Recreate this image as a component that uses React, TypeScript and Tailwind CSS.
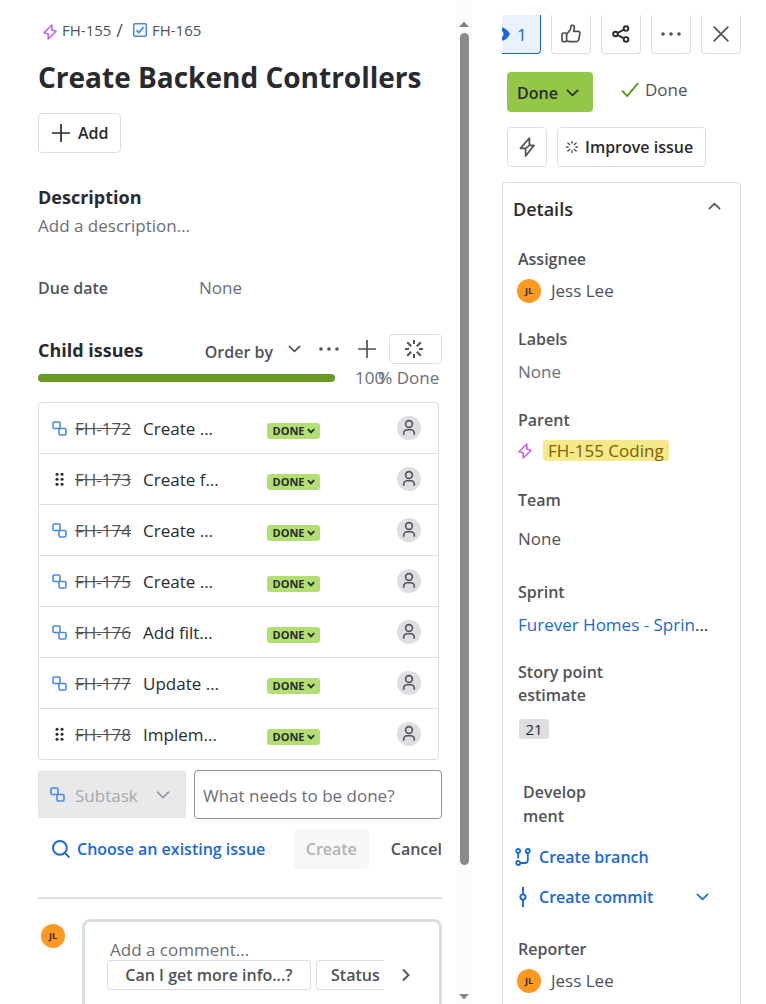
import React from "react";

type IconProps = { className?: string };

const Chevron = ({ className = "" }: IconProps) => (
  <svg viewBox="0 0 14 8" className={className} fill="none" stroke="currentColor" strokeWidth="1.8" strokeLinecap="round" strokeLinejoin="round" aria-hidden="true">
    <path d="M1.5 1.2 7 6.6l5.500-5.400" />
  </svg>
);

const EpicIcon = ({ className = "" }: IconProps) => (
  <svg viewBox="0 0 14 16" className={className} fill="none" stroke="#bf63f3" strokeWidth="1.600" strokeLinejoin="round" aria-hidden="true">
    <path d="M8.800 1v5.100l4.200 1.200-7.800 7.700V9.900L1 8.700z" />
  </svg>
);

const TaskIcon = () => (
  <svg viewBox="0 0 14 14" className="size-[14px]" fill="none" stroke="#4688ec" strokeWidth="1.500" aria-hidden="true">
    <rect x="0.750" y="0.750" width="12.500" height="12.500" rx="1" />
    <path d="m3.500 7.200 2.400 2.500 4.600-5.600" strokeWidth="1.700" />
  </svg>
);

const SubtaskIcon = () => (
  <svg viewBox="0 0 15 15" className="size-[15px] shrink-0" fill="none" stroke="#4688ec" strokeWidth="1.600" strokeLinejoin="round" aria-hidden="true">
    <rect x="1" y="1" width="7" height="6.500" rx="1.200" />
    <path d="M8 7.500h4.600A1.400 1.400 0 0 1 14 8.900v3.700a1.400 1.400 0 0 1-1.400 1.400H8.400A1.400 1.400 0 0 1 7 12.600V7.500" />
  </svg>
);

const DragIcon = () => (
  <svg viewBox="0 0 15 15" className="size-[15px] shrink-0" fill="#292a2e" aria-hidden="true">
    {[2.2, 7.2, 12.2].map((y) => (
      <g key={y}>
        <circle cx="5" cy={y} r="1.500" />
        <circle cx="10" cy={y} r="1.500" />
      </g>
    ))}
  </svg>
);

const PlusIcon = ({ className = "" }: IconProps) => (
  <svg viewBox="0 0 18 18" className={className} fill="none" stroke="currentColor" strokeWidth="1.700" aria-hidden="true">
    <path d="M9 0v18M0 9h18" />
  </svg>
);

const DotsIcon = () => (
  <svg viewBox="0 0 22 4" className="h-[4px] w-[22px]" fill="currentColor" aria-hidden="true">
    <circle cx="3" cy="2" r="1.800" />
    <circle cx="11" cy="2" r="1.800" />
    <circle cx="19" cy="2" r="1.800" />
  </svg>
);

const BurstIcon = ({ className = "" }: IconProps) => (
  <svg viewBox="0 0 18 18" className={className} fill="none" stroke="currentColor" strokeWidth="2" aria-hidden="true">
    <path d="M9 0v4M9 14v4M0 9h4M14 9h4M2.200 2.200l4 4M11.800 11.800l4 4M15.800 2.200l-4 4M6.200 11.800l-4 4" />
  </svg>
);

const PersonIcon = () => (
  <svg viewBox="0 0 24 24" className="size-6" fill="none" stroke="#505258" strokeWidth="1.600" aria-hidden="true">
    <circle cx="12" cy="8" r="3.400" />
    <path d="M6.700 18.800v-1.600a3.400 3.400 0 0 1 3.400-3.400h3.800a3.400 3.400 0 0 1 3.400 3.400v1.600" />
  </svg>
);

const LikeIcon = () => (
  <svg viewBox="0 0 20 20" className="size-5" fill="none" stroke="currentColor" strokeWidth="1.700" strokeLinejoin="round" aria-hidden="true">
    <rect x="1" y="9" width="4.600" height="8.600" rx="1.200" />
    <path d="M5.600 10.200 9.300 5.800l.5-3.200c.2-1.100 1-1.600 1.900-1.300 1.300.4 1.800 1.500 1.600 2.800L12.700 7.400h4.400c1.300 0 2 1 1.800 2.200l-1.300 6.300c-.2 1-1 1.700-2 1.700H8.200l-2.600-.9" />
  </svg>
);

const ShareIcon = () => (
  <svg viewBox="0 0 18 18" className="size-[18px]" fill="none" stroke="#292a2e" strokeWidth="1.900" aria-hidden="true">
    <circle cx="3.500" cy="9" r="2.300" />
    <circle cx="14" cy="3.600" r="2.300" />
    <circle cx="14" cy="14.400" r="2.300" />
    <path d="m5.600 8 6.300-3.300M5.600 10l6.300 3.300" />
  </svg>
);

const CloseIcon = () => (
  <svg viewBox="0 0 16 16" className="size-4" fill="none" stroke="currentColor" strokeWidth="1.700" strokeLinecap="round" aria-hidden="true">
    <path d="m1.200 1.200 13.600 13.600M14.800 1.200 1.200 14.800" />
  </svg>
);

const BoltIcon = () => (
  <svg viewBox="0 0 18 20" className="h-5 w-[18px]" fill="none" stroke="currentColor" strokeWidth="1.700" strokeLinejoin="round" aria-hidden="true">
    <path d="M11.400 1 2.400 11.400h5.200v7.600L16 8.400h-4.600zM7.600 11.400l3.800-3" />
  </svg>
);

const CheckIcon = () => (
  <svg viewBox="0 0 18 16" className="h-4 w-[18px]" fill="none" stroke="#5b9a17" strokeWidth="1.900" aria-hidden="true">
    <path d="m1 8.600 5.200 5.400L17 1.200" />
  </svg>
);

const SearchIcon = () => (
  <svg viewBox="0 0 18 18" className="size-[18px]" fill="none" stroke="currentColor" strokeWidth="1.900" aria-hidden="true">
    <circle cx="7.900" cy="7.900" r="6.900" />
    <path d="m12.800 12.800 4.700 4.700" />
  </svg>
);

const BranchIcon = () => (
  <svg viewBox="0 0 16 18" className="h-[18px] w-4" fill="none" stroke="currentColor" strokeWidth="1.800" aria-hidden="true">
    <circle cx="3.200" cy="3" r="2" />
    <circle cx="12.800" cy="3" r="2" />
    <circle cx="3.200" cy="15" r="2" />
    <path d="M3.200 5v5.600M12.800 5v7.200a2.800 2.800 0 0 1-2.800 2.800H5.200" />
  </svg>
);

const CommitIcon = () => (
  <svg viewBox="0 0 16 20" className="h-5 w-4" fill="none" stroke="currentColor" strokeWidth="1.900" aria-hidden="true">
    <circle cx="8" cy="10" r="2.600" />
    <path d="M8 0v7.400M8 12.600V20" />
  </svg>
);

const Avatar = () => (
  <span className="flex size-6 shrink-0 items-center justify-center rounded-full bg-[#ff991f] text-[9px] font-bold text-[#292a2e]">
    JL
  </span>
);

const children = [
  { key: "FH-172", summary: "Create ...", hovered: false },
  { key: "FH-173", summary: "Create f...", hovered: true },
  { key: "FH-174", summary: "Create ...", hovered: false },
  { key: "FH-175", summary: "Create ...", hovered: false },
  { key: "FH-176", summary: "Add filt...", hovered: false },
  { key: "FH-177", summary: "Update ...", hovered: false },
  { key: "FH-178", summary: "Implem...", hovered: true },
];

const iconButton = "flex h-[39px] w-10 shrink-0 items-center justify-center rounded-b-[4px] border border-t-0 border-[#dddee1] text-[#505258]";

function IssuePane() {
  return (
    <main className="min-w-0 flex-1 overflow-hidden pl-[38px] pr-[14px] pt-5">
      <nav aria-label="Breadcrumb" className="flex h-5 items-center pl-[5px] text-[15px] text-[#505258]">
        <EpicIcon className="mt-1 h-4 w-[14px]" />
        <a href="#FH-155" className="ml-[5px]">FH-155</a>
        <span className="ml-[5px] text-[18px]">/</span>
        <a href="#FH-165" className="ml-[10px] flex items-center gap-[5px]">
          <TaskIcon />
          FH-165
        </a>
      </nav>
      <h1 className="mt-[17px] whitespace-nowrap text-[28px] font-bold leading-10 text-[#292a2e]">Create Backend Controllers</h1>
      <button type="button" className="mt-4 flex h-10 items-center gap-2 rounded-[4px] border border-[#dddee1] pl-[13px] pr-[11px] text-[16px] font-semibold text-[#292a2e]">
        <PlusIcon className="size-[18px]" />
        Add
      </button>

      <h2 className="mt-8 text-[18px] font-bold leading-6 text-[#292a2e]">Description</h2>
      <p className="mt-[5px] leading-6 text-[#6b6e76]">Add a description...</p>

      <div className="mt-[38px] flex leading-6">
        <span className="w-[161px] text-[16px] font-semibold text-[#505258]">Due date</span>
        <span className="text-[#6b6e76]">None</span>
      </div>

      <section aria-label="Child issues">
        <div className="mt-[34px] flex h-[30px] items-center text-[#505258]">
          <h2 className="flex-1 whitespace-nowrap pt-[2px] text-[18px] font-bold text-[#292a2e]">Child issues</h2>
          <button type="button" className="flex items-center gap-[15px] text-[16px] font-semibold">
            <span className="pt-[6px]">Order by</span>
            <Chevron className="h-2 w-[13px]" />
          </button>
          <button type="button" aria-label="More actions" className="ml-[17px]"><DotsIcon /></button>
          <button type="button" aria-label="Create child issue" className="ml-[18px]"><PlusIcon className="size-[18px]" /></button>
          <button type="button" aria-label="Suggest child issues" className="ml-[13px] flex h-[30px] w-[53px] items-center justify-center rounded-[4px] border border-[#dddee1] pr-1">
            <BurstIcon className="size-[18px]" />
          </button>
        </div>
        <div className="mt-[2px] flex h-6 items-center">
          <div role="progressbar" aria-label="Child issues done" aria-valuenow={100} className="h-2 flex-1 rounded-full bg-[#6a9a23]" />
          <span className="ml-5 w-[87px] whitespace-nowrap text-[#6b6e76]">
            100<span className="-ml-[6px]">% Done</span>
          </span>
        </div>
        <ul className="mt-3 rounded-[4px] border border-[#dddee1] mr-[3px] divide-y divide-[#dddee1]">
          {children.map((c, i) => (
            <li key={c.key} className={i === children.length - 1 ? "flex h-[50px] items-center pl-[13px] pr-[17px]" : "flex h-[51px] items-center pl-[13px] pr-[17px]"}>
              {c.hovered ? <DragIcon /> : <SubtaskIcon />}
              <a href={`#${c.key}`} className="ml-2 w-[68px] whitespace-nowrap pt-[2px] text-[#505258] line-through">{c.key}</a>
              <span className="flex-1 whitespace-nowrap pt-[2px] text-[#292a2e]">{c.summary}</span>
              <button type="button" className="mr-[77px] mt-[6px] flex h-4 w-[53px] items-center justify-center gap-[2px] rounded-[3px] bg-[#b3df72] text-[11px] font-bold leading-4 text-[#292a2e]">
                DONE
                <svg viewBox="0 0 8 6" className="h-[6px] w-2" fill="none" stroke="currentColor" strokeWidth="1.800" aria-hidden="true">
                  <path d="m0.800 1.200 3.200 3.200 3.200-3.200" />
                </svg>
              </button>
              <span className="rounded-full bg-[#dddee1]" role="img" aria-label="Unassigned"><PersonIcon /></span>
            </li>
          ))}
        </ul>
      </section>

      <form onSubmit={(e) => e.preventDefault()}>
        <div className="mt-[10px] flex items-center gap-2">
          <div className="relative w-[148px] shrink-0">
            <select aria-label="Issue type" disabled className="h-[47px] w-full appearance-none rounded-[3px] border border-[#dfe1e4] bg-[#e8e9ea] pl-[36px] pt-[2px] text-[#a5a8ae] opacity-100">
              <option>Subtask</option>
            </select>
            <span className="pointer-events-none absolute inset-y-0 left-3 flex items-center"><SubtaskIcon /></span>
            <span className="pointer-events-none absolute inset-y-0 right-4 flex items-center text-[#97999e]"><Chevron className="h-2 w-[14px]" /></span>
          </div>
          <input aria-label="Summary" placeholder="What needs to be done?" className="h-[49px] min-w-0 flex-1 rounded-[4px] border border-[#8c8f97] px-2 pt-[2px] placeholder:text-[#6b6e76]" />
        </div>
        <div className="mt-[10px] flex h-10 items-center whitespace-nowrap text-[16px] font-semibold">
          <button type="button" className="ml-[14px] flex items-center gap-[7px] text-[#1868db]">
            <SearchIcon />
            Choose an existing issue
          </button>
          <button type="submit" disabled className="ml-auto h-10 w-[75px] rounded-[4px] bg-[#f7f7f7] text-[#b0b2b7]">Create</button>
          <button type="button" className="ml-[22px] text-[#505258]">Cancel</button>
        </div>
      </form>

      <hr className="mt-7 border-t-2 border-[#dddee1]" />

      <div className="mt-5 flex items-start">
        <div className="ml-[3px] mt-[5px]"><Avatar /></div>
        <div className="ml-[17px] h-40 min-w-0 flex-1 rounded-t-[8px] border-[3px] border-[#dddee1] pl-[22px] pt-[18px]">
          <p className="pl-[3px] leading-[20px] text-[#6b6e76]">Add a comment...</p>
          <div className="flex items-center">
            <div className="flex min-w-0 flex-1 gap-[5px] overflow-hidden whitespace-nowrap text-[16px] font-semibold text-[#505258]">
              <button type="button" className="h-[30px] w-[204px] shrink-0 rounded-[3px] border border-[#dddee1]">Can I get more info...?</button>
              <button type="button" className="h-[30px] shrink-0 rounded-[3px] border border-[#dddee1] px-[14px]">Status update...</button>
            </div>
            <button type="button" aria-label="Next suggestions" className="flex w-[55px] justify-center pr-3 text-[#505258]">
              <svg viewBox="0 0 8 14" className="h-[14px] w-2" fill="none" stroke="currentColor" strokeWidth="1.900" aria-hidden="true">
                <path d="m1 1.500 5.500 5.500L1 12.500" />
              </svg>
            </button>
          </div>
        </div>
      </div>
    </main>
  );
}

function Scrollbar() {
  return (
    <div aria-hidden="true" className="flex w-4 shrink-0 flex-col items-center bg-[#fcfcfc] pb-1 pt-[21px]">
      <svg viewBox="0 0 10 6" className="h-[6px] w-[10px] shrink-0" fill="#858585"><path d="M0 6 5 0.500 10 6z" /></svg>
      <div className="mt-[6px] h-[832px] w-[9px] rounded-full bg-[#8b8b8b]" />
      <svg viewBox="0 0 10 6" className="mt-auto h-[6px] w-[10px] shrink-0" fill="#858585"><path d="M0 0 5 5.500 10 0z" /></svg>
    </div>
  );
}

function Label({ children: text }: { children: React.ReactNode }) {
  return <dt className="mt-6 text-[16px] font-semibold leading-6 text-[#505258]">{text}</dt>;
}

function Person() {
  return (
    <dd className="-ml-px mt-2 flex items-center gap-[10px] leading-6 text-[#505258]">
      <Avatar />
      Jess Lee
    </dd>
  );
}

function DetailsPane() {
  return (
    <aside className="ml-[30px] mr-[25px] flex w-[239px] shrink-0 flex-col overflow-hidden pt-[15px]">
      <div className="flex justify-end gap-[10px] overflow-hidden">
        <button type="button" aria-label="1 watcher" className="flex h-[39px] w-[62px] shrink-0 items-center gap-[7px] rounded-br-[4px] border border-t-0 border-[#1868db] bg-[#e9f2fe] pl-[10px] text-[#1868db]">
          <svg viewBox="0 0 20 14" className="h-[14px] w-5 shrink-0" fill="currentColor" aria-hidden="true">
            <path fillRule="evenodd" d="M10 0c4.500 0 8 3 10 7-2 4-5.500 7-10 7S2 11 0 7c2-4 5.500-7 10-7Zm0 3.500a3.500 3.500 0 1 0 0 7 3.500 3.500 0 0 0 0-7Z" />
          </svg>
          <span className="pt-[2px]">1</span>
        </button>
        <button type="button" aria-label="Like" className={iconButton}><LikeIcon /></button>
        <button type="button" aria-label="Share" className={iconButton}><ShareIcon /></button>
        <button type="button" aria-label="Actions" className={iconButton}><DotsIcon /></button>
        <button type="button" aria-label="Close" className={iconButton}><CloseIcon /></button>
      </div>

      <div className="mt-[18px] flex pl-[5px]">
        <button type="button" aria-haspopup="menu" className="flex h-10 w-[86px] items-center gap-2 rounded-[4px] bg-[#94c748] pl-[10px] pt-[2px] text-[16px] font-semibold text-[#292a2e]">
          Done
          <Chevron className="h-2 w-[13px]" />
        </button>
        <span className="ml-7 flex h-9 items-center gap-[6px] text-[#505258]">
          <CheckIcon />
          Done
        </span>
      </div>

      <div className="mt-[15px] flex gap-[10px] pl-[5px]">
        <button type="button" aria-label="Automation" className="flex size-10 items-center justify-center rounded-[4px] border border-[#dddee1] text-[#505258]"><BoltIcon /></button>
        <button type="button" className="flex h-10 w-[149px] items-center gap-[7px] whitespace-nowrap rounded-[4px] border border-[#dddee1] pl-2 text-[16px] font-semibold text-[#292a2e]">
          <BurstIcon className="size-3 text-[#505258]" />
          Improve issue
        </button>
      </div>

      <section className="mt-[15px] flex-1 rounded-t-[4px] border border-b-0 border-[#dddee1] pl-[15px] pt-[14px]">
        <button type="button" aria-expanded="true" className="-ml-[5px] flex w-[208px] items-center justify-between leading-6 text-[#505258]">
          <span className="text-[18px] font-semibold text-[#292a2e]">Details</span>
          <Chevron className="mb-[6px] h-2 w-[13px] rotate-180" />
        </button>
        <dl className="pt-[2px]">
          <Label>Assignee</Label>
          <Person />
          <Label>Labels</Label>
          <dd className="mt-[9px] leading-6 text-[#6b6e76]">None</dd>
          <Label>Parent</Label>
          <dd className="mt-2 flex items-center gap-[11px]">
            <EpicIcon className="h-4 w-[14px]" />
            <a href="#FH-155" className="h-[21px] overflow-hidden rounded-[3px] bg-[#f5e989] px-[5px] leading-[22px] text-[#7f5f01]">FH-155 Coding</a>
          </dd>
          <dt className="mt-[27px] text-[16px] font-semibold leading-6 text-[#505258]">Team</dt>
          <dd className="mt-[15px] leading-6 text-[#505258]">None</dd>
          <dt className="mt-[29px] text-[16px] font-semibold leading-6 text-[#505258]">Sprint</dt>
          <dd className="mt-[9px] whitespace-nowrap leading-6 text-[#292a2e]">
            <a href="#sprint" className="text-[#1868db]">Furever Homes - Sprin</a>...
          </dd>
          <dt className="mt-6 w-[110px] text-[16px] font-semibold leading-[23px] text-[#505258]">Story point estimate</dt>
          <dd className="mt-3 flex">
            <span className="ml-px h-5 w-[30px] rounded-[3px] bg-[#dddee1] text-center text-[15px] leading-5 text-[#292a2e]">21</span>
          </dd>
          <dt className="ml-[5px] mt-[41px] text-[16px] font-semibold leading-6 text-[#505258]">Develop<br />ment</dt>
          <dd className="-ml-[3px] mt-[17px] text-[16px] font-semibold leading-6 text-[#1868db]">
            <a href="#branch" className="flex items-center gap-2"><BranchIcon />Create branch</a>
            <div className="mt-4 flex items-center justify-between pr-[31px]">
              <a href="#commit" className="flex items-center gap-2"><CommitIcon />Create commit</a>
              <button type="button" aria-label="More commit options"><Chevron className="h-2 w-[13px]" /></button>
            </div>
          </dd>
          <dt className="mt-7 text-[16px] font-semibold leading-6 text-[#505258]">Reporter</dt>
          <Person />
        </dl>
      </section>
    </aside>
  );
}

export default function App() {
  return (
    <div className="flex h-screen overflow-hidden bg-white font-['Open_Sans','Noto_Sans',sans-serif] text-[17px]">
      <IssuePane />
      <Scrollbar />
      <DetailsPane />
    </div>
  );
}
